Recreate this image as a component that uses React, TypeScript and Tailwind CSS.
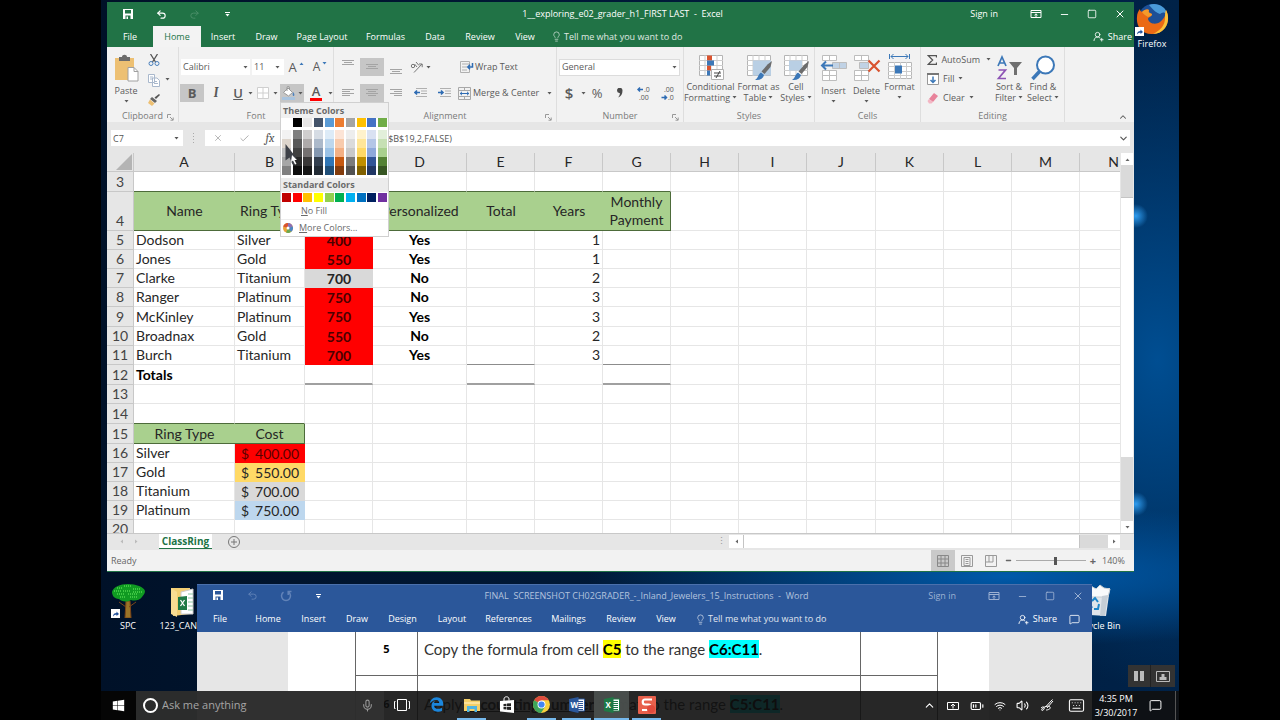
import type { ReactNode } from "react";
import clsx from "clsx";
import {
  BatteryMedium,
  Check,
  ChevronDown,
  ChevronUp,
  Keyboard,
  Lightbulb,
  MessageSquare,
  Mic,
  Minus,
  Square,
  Undo2,
  UserRoundPlus,
  Volume2,
  Wifi,
  X,
} from "lucide-react";
import { FaEdgeLegacy, FaWindows } from "react-icons/fa";

/* ---------- data ---------- */

const excelTabs = [
  { name: "File", width: "w-[46px]" },
  { name: "Home", width: "w-12" },
  { name: "Insert", width: "w-11" },
  { name: "Draw", width: "w-[43px]" },
  { name: "Page Layout", width: "w-[68px]" },
  { name: "Formulas", width: "w-[59px]" },
  { name: "Data", width: "w-10" },
  { name: "Review", width: "w-[50px]" },
  { name: "View", width: "w-10" },
];

const wordTabs = [
  { name: "File", width: "w-[46px]" },
  { name: "Home", width: "w-[50px]" },
  { name: "Insert", width: "w-[41px]" },
  { name: "Draw", width: "w-[46px]" },
  { name: "Design", width: "w-[45px]" },
  { name: "Layout", width: "w-[54px]" },
  { name: "References", width: "w-[59px]" },
  { name: "Mailings", width: "w-[61px]" },
  { name: "Review", width: "w-11" },
  { name: "View", width: "w-[46px]" },
];

const columns = [
  { name: "A", width: "w-[101px]" },
  { name: "B", width: "w-[70px]" },
  { name: "C", width: "w-[68px]" },
  { name: "D", width: "w-[94px]" },
  { name: "E", width: "w-[68px]" },
  { name: "F", width: "w-[68px]" },
  { name: "G", width: "w-[68px]" },
  { name: "H", width: "w-[68px]" },
  { name: "I", width: "w-[68px]" },
  { name: "J", width: "w-[69px]" },
  { name: "K", width: "w-[68px]" },
  { name: "L", width: "w-[68px]" },
  { name: "M", width: "w-[68px]" },
  { name: "N", width: "w-[68px]" },
];

type Row = { n: number; tall?: boolean; cells: string[] };

const rows: Row[] = [
  { n: 3, tall: true, cells: [] },
  {
    n: 4,
    cells: ["Name", "Ring Type", "Cost", "Personalized", "Total", "Years", "Monthly Payment"],
  },
  { n: 5, cells: ["Dodson", "Silver", "400", "Yes", "", "1"] },
  { n: 6, cells: ["Jones", "Gold", "550", "Yes", "", "1"] },
  { n: 7, cells: ["Clarke", "Titanium", "700", "No", "", "2"] },
  { n: 8, cells: ["Ranger", "Platinum", "750", "No", "", "3"] },
  { n: 9, tall: true, cells: ["McKinley", "Platinum", "750", "Yes", "", "3"] },
  { n: 10, cells: ["Broadnax", "Gold", "550", "No", "", "2"] },
  { n: 11, cells: ["Burch", "Titanium", "700", "Yes", "", "3"] },
  { n: 12, tall: true, cells: ["Totals"] },
  { n: 13, cells: [] },
  { n: 14, tall: true, cells: [] },
  { n: 15, tall: true, cells: ["Ring Type", "Cost"] },
  { n: 16, cells: ["Silver", "400.00"] },
  { n: 17, cells: ["Gold", "550.00"] },
  { n: 18, cells: ["Titanium", "700.00"] },
  { n: 19, cells: ["Platinum", "750.00"] },
  { n: 20, cells: [] },
];

const costFill: Record<number, string> = {
  16: "bg-[#ff0000]",
  17: "bg-[#ffd966]",
  18: "bg-[#d9d9d9]",
  19: "bg-[#bdd7ee]",
};

const themeColors = [
  ["#ffffff", "#f2f2f2", "#ddd5cc", "#bfbfbf", "#a6a6a6", "#808080"],
  ["#000000", "#7f7f7f", "#595959", "#404040", "#262626", "#0d0d0d"],
  ["#e7e6e6", "#d0cece", "#aeaaaa", "#757171", "#3a3838", "#161616"],
  ["#44546a", "#d6dce4", "#acb9ca", "#8497b0", "#333f4f", "#222b35"],
  ["#5b9bd5", "#ddebf7", "#bdd7ee", "#9bc2e6", "#2f75b5", "#1f4e78"],
  ["#ed7d31", "#fce4d6", "#f8cbad", "#f4b084", "#c65911", "#833c0c"],
  ["#a5a5a5", "#ededed", "#dbdbdb", "#c9c9c9", "#7b7b7b", "#525252"],
  ["#ffc000", "#fff2cc", "#ffe699", "#ffd966", "#bf8f00", "#806000"],
  ["#4472c4", "#d9e1f2", "#b4c6e7", "#8ea9db", "#305496", "#203764"],
  ["#70ad47", "#e2efda", "#c6e0b4", "#a9d08e", "#548235", "#375623"],
];

const standardColors = [
  "#c00000", "#ff0000", "#ffc000", "#ffff00", "#92d050",
  "#00b050", "#00b0f0", "#0070c0", "#002060", "#7030a0",
];

/* ---------- small shared pieces ---------- */

const Caret = ({ className }: { className?: string }) => (
  <svg viewBox="0 0 5 3" className={clsx("w-[5px] h-[3px] shrink-0", className)} fill="currentColor">
    <path d="M0.5 0h4L2.5 2.5z" />
  </svg>
);

const RibbonOptions = () => (
  <svg viewBox="0 0 12 10" className="w-3 h-2.5" fill="none" stroke="currentColor">
    <path d="M1 1.5h10v7H1zM1 3.5h10M6 8V5M4.5 6.2L6 4.8l1.500 1.400" />
  </svg>
);

const WindowButtons = () => (
  <div className="flex">
    <button aria-label="Ribbon display options" className="w-7 h-[22px] flex items-center justify-center">
      <RibbonOptions />
    </button>
    <button aria-label="Minimize" className="w-7 h-[22px] flex items-center justify-center">
      <Minus size={11} strokeWidth={2} />
    </button>
    <button aria-label="Maximize" className="w-7 h-[22px] flex items-center justify-center">
      <Square size={10} strokeWidth={2} />
    </button>
    <button aria-label="Close" className="w-7 h-[22px] flex items-center justify-center">
      <X size={12} strokeWidth={2} />
    </button>
  </div>
);

const SaveIcon = () => (
  <svg viewBox="0 0 10 10" className="w-2.5 h-2.5">
    <path d="M0 0h10v10H0z" fill="#fff" />
    <path d="M2 1h6v3.500H2zM2.500 6.500h5V10h-5z" fill="currentColor" />
    <path d="M3.500 7.500h1.500V10H3.500z" fill="#fff" />
  </svg>
);

const RepeatIcon = () => (
  <svg viewBox="0 0 12 12" className="w-3 h-3" fill="none" stroke="currentColor" strokeWidth="1.500">
    <path d="M8.500 2.200A4.500 4.500 0 1 1 3.500 2.200M8.200 5V1.500h3.300" />
  </svg>
);

const QuickCaret = () => (
  <svg viewBox="0 0 5 5" className="w-[5px] h-[5px]" fill="#fff">
    <path d="M0 0h5v1H0zM0.500 2h4L2.500 4.500z" />
  </svg>
);

const Launcher = () => (
  <svg viewBox="0 0 7 7" className="w-[7px] h-[7px] text-[#999]" fill="none" stroke="currentColor">
    <path d="M0.500 4V0.500H4M3 3l3 3M6.200 3.500v2.700H3.500" />
  </svg>
);

const Group = ({
  label,
  width,
  launcher,
  children,
}: {
  label: string;
  width: string;
  launcher?: boolean;
  children: ReactNode;
}) => (
  <section className={clsx("shrink-0 flex flex-col border-r border-[#dedede]", width)}>
    <div className="h-[63px] pt-[7px]">{children}</div>
    <div className="h-3 flex items-center justify-center relative text-[#7a7a7a]">
      {label}
      {launcher && (
        <button aria-label={`${label} settings`} className="absolute right-1 top-1">
          <Launcher />
        </button>
      )}
    </div>
  </section>
);

const Tool = ({
  label,
  active,
  width = "w-6",
  children,
}: {
  label: string;
  active?: boolean;
  width?: string;
  children: ReactNode;
}) => (
  <button
    aria-label={label}
    className={clsx("h-[18px] shrink-0 flex items-center justify-center gap-0.5", width, active && "bg-[#c6c6c6]")}
  >
    {children}
  </button>
);

const BigTool = ({
  lines,
  width,
  icon,
  caretBelow,
}: {
  lines: string[];
  width: string;
  icon: ReactNode;
  caretBelow?: boolean;
}) => (
  <button className={clsx("shrink-0 flex flex-col items-center leading-[11px] whitespace-nowrap", width)}>
    <span className="h-[27px] flex items-center justify-center">{icon}</span>
    <span className={clsx(caretBelow && "pt-1")}>{lines[0]}</span>
    {lines[1] ? (
      <span className="flex items-center gap-0.5">
        {lines[1]}
        <Caret />
      </span>
    ) : (
      <Caret className="mt-1" />
    )}
  </button>
);

/* ---------- ribbon drawings ---------- */

const AlignLines = ({ widths, align }: { widths: number[]; align: "left" | "mid" | "right" }) => (
  <svg viewBox="0 0 12 10" className="w-3 h-2.5" stroke="#a4a4a4">
    {widths.map((w, i) => {
      const x = align === "left" ? 0 : align === "right" ? 12 - w : (12 - w) / 2;
      return <path key={i} d={`M${x} ${i * 2 + 1.5}h${w}`} />;
    })}
  </svg>
);

const VerticalAlign = ({ top }: { top: number }) => (
  <svg viewBox="0 0 12 16" className="w-3 h-4" stroke="#a4a4a4">
    <path d={`M0 ${top + 0.5}h12M2 ${top + 2.5}h8M0 ${top + 4.5}h12`} />
  </svg>
);

const IndentIcon = ({ out }: { out?: boolean }) => (
  <svg viewBox="0 0 13 10" className="w-[13px] h-2.5" fill="none">
    <path d="M2 0.500h11M7 3h6M7 5.500h6M2 8.500h11" stroke="#b0b0b0" />
    <path
      d={out ? "M6 4.500H1M3 2.500l-2 2 2 2" : "M0 4.500h5M3 2.500l2 2-2 2"}
      stroke="#2f6cb3"
      strokeWidth="1.600"
    />
  </svg>
);

const Grid = ({ children }: { children?: ReactNode }) => (
  <svg viewBox="0 0 26 26" className="w-[26px] h-[26px]" fill="none">
    <path d="M1.500 0.500h23v20h-23z" fill="#fff" stroke="#b5b5b5" />
    <path d="M1 5.500h24M1 10.500h24M1 15.500h24M7 0v21M13 0v21M19 0v21" stroke="#cdcdcd" />
    {children}
  </svg>
);

const Brush = () => (
  <>
    <path d="M26 6l-1.500 6-6 7-3-2.500 6-7z" fill="#6c6c6c" />
    <path d="M15 17.500l3 2.500c-1 4-4 5.500-9 5 3-1.500 3-5.500 6-7.500z" fill="#3c78b8" />
  </>
);

const PasteIcon = () => (
  <svg viewBox="0 0 26 28" className="w-[26px] h-7">
    <path d="M2 4h19v22H2z" fill="#edc073" />
    <path d="M6 3h3c0-3 5-3 5 0h3v4H6z" fill="#6b6b6b" />
    <path d="M15 13.500h6l4 4V27H15z" fill="#fff" stroke="#a0a0a0" />
    <path d="M21 13.500v4h4" fill="none" stroke="#a0a0a0" />
  </svg>
);

const ScissorsIcon = () => (
  <svg viewBox="0 0 12 12" className="w-3 h-3" fill="none">
    <path d="M2.500 0l5 8M9.500 0l-5 8" stroke="#555" strokeWidth="1.300" />
    <circle cx="3" cy="9.500" r="2" stroke="#4a80bd" />
    <circle cx="9" cy="9.500" r="2" stroke="#4a80bd" />
  </svg>
);

const CopyIcon = () => (
  <svg viewBox="0 0 12 13" className="w-3 h-[13px]" fill="#fff" stroke="#a9b8cc">
    <path d="M0.500 0.500h6v8h-6zM4.500 4h4.500l2.500 2.500v6h-7z" />
    <path d="M6 7.500h3M6 9.500h4M2 3h3M2 5h2" />
  </svg>
);

const PainterIcon = () => (
  <svg viewBox="0 0 12 12" className="w-3 h-3">
    <path d="M11 0l1 1-4 4-1.500-1.500z" fill="#555" />
    <path d="M4 3l5 4-2 2-5-4z" fill="#666" />
    <path d="M2 5.500l4.500 4L4 12 0 9z" fill="#edc073" />
  </svg>
);

const OrientationIcon = () => (
  <svg viewBox="0 0 14 12" className="w-3.5 h-3" fill="none" stroke="#777">
    <path d="M4 11.500L12 3M9 3h3.200v3.200" />
    <circle cx="3" cy="5" r="1.700" />
    <path d="M4.500 3l2.500 3M6 1l3 3.500" />
  </svg>
);

const WrapIcon = () => (
  <svg viewBox="0 0 14 12" className="w-3.5 h-3" fill="none">
    <path d="M0.500 0.500h9v11h-9zM2 3h8M2 6h5M2 9h5" stroke="#b0b0b0" />
    <path d="M12.500 2v4H8M10 3.800L7.800 6 10 8.200" stroke="#2f6cb3" strokeWidth="1.500" />
  </svg>
);

const MergeIcon = () => (
  <svg viewBox="0 0 13 13" className="w-[13px] h-[13px]" fill="none">
    <path d="M0.500 0.500h12v12h-12zM0.500 3.500h12M0.500 9.500h12M6.500 0.500v3M6.500 9.500v3" stroke="#a8a8a8" />
    <path d="M2 6.500h9M4 4.800L2.200 6.500 4 8.200M9 4.800l1.800 1.700L9 8.200" stroke="#2f6cb3" />
  </svg>
);

const BucketIcon = () => (
  <svg viewBox="0 0 14 14" className="w-3.5 h-3.5">
    <path d="M0 11h13v3H0z" fill="#a9c4df" />
    <path d="M1.500 6.500L6 2l4.500 4.500L6.500 10z" fill="#fff" stroke="#999" />
    <path d="M5 5V1.500C5 0 7.500 0 7.500 1.500V4" fill="none" stroke="#999" />
    <path d="M11 6c2 2 1.500 4 0.500 4s-1-2-0.500-4z" fill="#4a80bd" />
  </svg>
);

const DecimalIcon = ({ more }: { more?: boolean }) => (
  <svg viewBox="0 0 14 16" className="w-3.5 h-4">
    <text x={more ? 7 : 3} y="7" fontSize="7" fill="#555">{more ? ".0" : ".00"}</text>
    <text x={more ? 2 : 7} y="15" fontSize="7" fill="#555">{more ? ".00" : ".0"}</text>
    <path
      d={more ? "M6 4.500H1M3 2.500l-2 2 2 2" : "M0.500 12.500h5M3.500 10.500l2 2-2 2"}
      fill="none"
      stroke="#2f6cb3"
      strokeWidth="1.500"
    />
  </svg>
);

const InsertCells = () => (
  <svg viewBox="0 0 28 26" className="w-7 h-[26px]" fill="#fff" stroke="#bdbdbd">
    <path d="M2.500 0.500h14v5h-14zM9.500 0.500v5M2.500 20.500h14v5h-14zM9.500 20.500v5M2.500 15.500h14v5h-14zM9.500 15.500v5" />
    <path d="M12.500 7.500h14v6h-14zM19.500 7.500v6" fill="#c0d2e5" />
    <path d="M13 10.500H2M6 6.500l-4 4 4 4" fill="none" stroke="#3c78b8" strokeWidth="2" />
  </svg>
);

const DeleteCells = () => (
  <svg viewBox="0 0 28 26" className="w-7 h-[26px]" fill="#fff" stroke="#bdbdbd">
    <path d="M1.500 0.500h14v5h-14zM8.500 0.500v5M1.500 20.500h14v5h-14zM8.500 20.500v5M1.500 15.500h14v5h-14zM8.500 15.500v5" />
    <path d="M6.500 7.500h9v6h-9z" fill="#c0d2e5" />
    <path d="M15.500 5.500l11 11M26.500 5.500l-11 11" stroke="#d9532f" strokeWidth="2.200" />
  </svg>
);

const FormatCells = () => (
  <svg viewBox="0 0 26 28" className="w-[26px] h-7" fill="none">
    <path d="M4 2.500h17M6.500 0L4 2.500 6.500 5M18.500 0L21 2.500 18.500 5M2.500 0v5M22.500 0v5" stroke="#3c78b8" />
    <path d="M1.500 8.500h23v16h-23z" fill="#fff" stroke="#b8b8b8" />
    <path d="M7.500 8v17M13.500 8v17M19.500 8v17M1 12.500h24M1 17.500h24M1 21.500h24" stroke="#cdcdcd" />
    <path d="M8 11.500h7v8H8z" fill="#3c78b8" />
  </svg>
);

const SortIcon = () => (
  <svg viewBox="0 0 26 26" className="w-[26px] h-[26px]" fill="none">
    <path d="M2 11L6 2l4 9M3.500 8h5" stroke="#3c78b8" strokeWidth="1.700" />
    <path d="M2.500 15h7l-7 8.500h7.500" stroke="#8d54b5" strokeWidth="1.700" />
    <path d="M13 7h13l-5 6v7h-3v-7z" fill="#707070" />
  </svg>
);

const FindIcon = () => (
  <svg viewBox="0 0 26 26" className="w-[26px] h-[26px]" fill="none" stroke="#3c78b8">
    <circle cx="15.500" cy="10" r="8.500" fill="#fff" strokeWidth="2" />
    <path d="M9.500 16.500L2.500 24" strokeWidth="3.500" />
  </svg>
);

const PersonIcon = () => <UserRoundPlus size={11} strokeWidth={1.8} />;

/* ---------- fill colour menu ---------- */

const ColorMenu = () => (
  <div className="absolute left-0 top-[18px] z-20 w-[109px] bg-white border border-[#d0d0d0] text-[#6a6a6a] text-[9px]">
    <h3 className="h-[15px] bg-[#f0f0f0] pl-0.5 leading-4 font-bold">Theme Colors</h3>
    <div className="flex justify-between px-px pb-[3px]">
      {themeColors.map((shades, i) => (
        <div key={i} className="flex flex-col">
          {shades.map((color, j) => (
            <button
              key={j}
              aria-label={`Theme color ${color}`}
              className={clsx("block w-[9px] h-[9px]", j === 0 && "mb-[3px]")}
              style={{ backgroundColor: color }}
            />
          ))}
        </div>
      ))}
    </div>
    <h3 className="h-[14px] bg-[#ececec] pl-0.5 leading-[14px] font-bold">Standard Colors</h3>
    <div className="flex justify-between px-px pt-px pb-px">
      {standardColors.map((color) => (
        <button
          key={color}
          aria-label={`Standard color ${color}`}
          className="block w-[9px] h-[9px]"
          style={{ backgroundColor: color }}
        />
      ))}
    </div>
    <button className="h-[17px] w-full flex items-center pl-5 border-b border-[#eee]">
      <span>
        <u>N</u>o Fill
      </span>
    </button>
    <button className="h-4 w-full flex items-center pl-0.5 gap-1.5 whitespace-nowrap">
      <svg viewBox="0 0 10 10" className="w-2.5 h-2.5 shrink-0">
        <circle cx="5" cy="5" r="5" fill="#e9a23b" />
        <path d="M5 5V0a5 5 0 0 1 4.700 3.500z" fill="#8a6fb8" />
        <path d="M5 5l4.700-1.500A5 5 0 0 1 8 9z" fill="#4a86c5" />
        <path d="M5 5l3 4a5 5 0 0 1-5 0.500z" fill="#6aa84f" />
        <path d="M5 5L0.200 3.500A5 5 0 0 1 5 0z" fill="#d9532f" />
        <circle cx="5" cy="5" r="1.500" fill="#fff" />
      </svg>
      <span>
        <u>M</u>ore Colors...
      </span>
    </button>
    {/* mouse pointer */}
    <svg viewBox="0 0 13 24" className="absolute left-1 top-10 w-[13px] h-6">
      <path d="M0.500 1v16.500l4-3 3 7h2.500l-2.500-7 4.500 1z" fill="#3d4047" />
      <path d="M7 12l5 5H9.500l2 4-1.500 0.500-2-4L6 19z" fill="#fff" />
    </svg>
  </div>
);

/* ---------- Excel ---------- */

const TabStrip = ({
  tabs,
  active,
  children,
}: {
  tabs: { name: string; width: string }[];
  active?: string;
  children?: ReactNode;
}) => (
  <nav className="flex-1 flex items-stretch text-white whitespace-nowrap">
    {tabs.map(({ name, width }) => (
      <button
        key={name}
        className={clsx(
          "shrink-0 flex items-center justify-center",
          width,
          name === active && "bg-[#f3f3f3] text-[#217346]"
        )}
      >
        {name}
      </button>
    ))}
    <button className="flex items-center gap-0.5 pl-1.5 opacity-85">
      <Lightbulb size={11} strokeWidth={1.5} />
      Tell me what you want to do
    </button>
    <div className="ml-auto flex items-center">{children}</div>
  </nav>
);

const Ribbon = () => (
  <div className="h-[75px] flex bg-[#f2f2f2] text-[#5a5a5a] relative">
    <Group label="Clipboard" width="w-[72px]" launcher>
      <div className="flex">
        <BigTool width="w-[38px]" lines={["Paste"]} icon={<PasteIcon />} caretBelow />
        <div className="flex flex-col justify-between w-[18px] items-center h-[52px]">
          <button aria-label="Cut"><ScissorsIcon /></button>
          <button aria-label="Copy"><CopyIcon /></button>
          <button aria-label="Format Painter"><PainterIcon /></button>
        </div>
        <Caret className="mt-6 ml-0.5" />
      </div>
    </Group>

    <Group label="Font" width="w-[155px]">
      <div className="h-[26px] flex items-center pl-0.5">
        <div className="relative flex items-center">
          <select aria-label="Font" className="appearance-none w-[69px] h-4 bg-white pl-0.5 mr-0.5">
            <option>Calibri</option>
          </select>
          <Caret className="absolute right-1" />
        </div>
        <div className="relative flex items-center">
          <select aria-label="Font size" className="appearance-none w-8 h-4 bg-white pl-0.5">
            <option>11</option>
          </select>
          <Caret className="absolute right-1" />
        </div>
        <Tool label="Increase font size">
          <span className="text-[13px]">A</span>
          <Caret className="rotate-180 text-[#3c78b8] mb-2" />
        </Tool>
        <Tool label="Decrease font size">
          <span className="text-xs">A</span>
          <Caret className="text-[#3c78b8] mb-2" />
        </Tool>
      </div>
      <div className="h-[26px] flex items-center pl-px">
        <Tool label="Bold" active><b className="text-[13px]">B</b></Tool>
        <Tool label="Italic"><i className="text-[13px] font-serif font-bold">I</i></Tool>
        <Tool label="Underline" width="w-5"><u className="text-[13px] font-semibold">U</u></Tool>
        <Caret />
        <Tool label="Borders" width="w-5">
          <svg viewBox="0 0 12 12" className="w-3 h-3" fill="#fff" stroke="#cfcfcf">
            <path d="M0.500 0.500h11v11h-11zM6 0.500v11M0.500 6h11" />
          </svg>
        </Tool>
        <Caret className="mr-0.5" />
        <div className="relative">
          <Tool label="Fill color" active>
            <BucketIcon />
            <Caret />
          </Tool>
          <ColorMenu />
        </div>
        <Tool label="Font color">
          <span className="border-b-[3px] border-[#ff0000] px-0.5 text-[13px] leading-[13px] font-semibold">A</span>
        </Tool>
        <Caret />
      </div>
    </Group>

    <Group label="Alignment" width="w-[223px]" launcher>
      <div className="h-[26px] flex items-center pl-0.5">
        <Tool label="Top align"><VerticalAlign top={1} /></Tool>
        <Tool label="Middle align" active><VerticalAlign top={5} /></Tool>
        <Tool label="Bottom align"><VerticalAlign top={10} /></Tool>
        <Tool label="Orientation"><OrientationIcon /><Caret /></Tool>
        <button className="ml-7 flex items-center gap-px">
          <WrapIcon />
          Wrap Text
        </button>
      </div>
      <div className="h-[26px] flex items-center pl-0.5">
        <Tool label="Align left"><AlignLines widths={[12, 8, 12, 8]} align="left" /></Tool>
        <Tool label="Center" active><AlignLines widths={[12, 8, 12, 8]} align="mid" /></Tool>
        <Tool label="Align right"><AlignLines widths={[12, 8, 12, 8]} align="right" /></Tool>
        <Tool label="Decrease indent"><IndentIcon out /></Tool>
        <Tool label="Increase indent"><IndentIcon /></Tool>
        <button className="ml-0.5 flex items-center gap-0.5 whitespace-nowrap">
          <MergeIcon />
          Merge &amp; Center
          <Caret className="ml-1.5" />
        </button>
      </div>
    </Group>

    <Group label="Number" width="w-[127px]" launcher>
      <div className="h-[26px] flex items-center relative">
        <select aria-label="Number format" className="appearance-none w-[121px] h-[17px] ml-0.5 pl-0.5 bg-white border border-[#dcdcdc]">
          <option>General</option>
        </select>
        <Caret className="absolute right-1.5" />
      </div>
      <div className="h-[26px] flex items-center">
        <Tool label="Accounting format"><span className="text-[15px] font-semibold">$</span></Tool>
        <Caret />
        <Tool label="Percent style" width="w-[22px]"><span className="text-[13px]">%</span></Tool>
        <Tool label="Comma style">
          <svg viewBox="0 0 6 10" className="w-1.5 h-2.5" fill="#4a4a4a">
            <path d="M0 2.500a2.500 2.500 0 0 1 5.500 0C5.500 6 4 8.500 1 9.500 2.500 8 3 6.500 2.800 5A2.500 2.500 0 0 1 0 2.500z" />
          </svg>
        </Tool>
        <Tool label="Increase decimal"><DecimalIcon more /></Tool>
        <Tool label="Decrease decimal"><DecimalIcon /></Tool>
      </div>
    </Group>

    <Group label="Styles" width="w-[131px]">
      <div className="flex">
        <BigTool
          width="w-[53px]"
          lines={["Conditional", "Formatting"]}
          icon={
            <Grid>
              <path d="M9 0.500h5v5H9zM9 10.500h4v5H9z" fill="#d9532f" />
              <path d="M9 5.500h7v5H9zM9 15.500h3v5H9z" fill="#3c78b8" />
              <path d="M13.500 14.500h12v10h-12z" fill="#fff" stroke="#b0b0b0" />
              <path d="M16 18h7M16 21h7M22 16l-4 7" stroke="#444" />
            </Grid>
          }
        />
        <BigTool
          width="w-[43px]"
          lines={["Format as", "Table"]}
          icon={
            <Grid>
              <path d="M7 5.500h18v15H7z" fill="#b9cfe4" />
              <Brush />
            </Grid>
          }
        />
        <BigTool
          width="w-8"
          lines={["Cell", "Styles"]}
          icon={
            <Grid>
              <path d="M6 5.500h13v10H6z" fill="#b9cfe4" />
              <Brush />
            </Grid>
          }
        />
      </div>
    </Group>

    <Group label="Cells" width="w-[106px]">
      <div className="flex pl-0.5">
        <BigTool width="w-[33px]" lines={["Insert"]} icon={<InsertCells />} caretBelow />
        <BigTool width="w-[33px]" lines={["Delete"]} icon={<DeleteCells />} caretBelow />
        <BigTool width="w-[33px]" lines={["Format"]} icon={<FormatCells />} />
      </div>
    </Group>

    <Group label="Editing" width="w-[144px]">
      <div className="flex">
        <div className="w-[70px] pl-1.5 flex flex-col -mt-1 whitespace-nowrap">
          <button className="h-[19px] flex items-center gap-1">
            <svg viewBox="0 0 12 12" className="w-3 h-3" fill="none" stroke="#555" strokeWidth="1.500">
              <path d="M11 3V1H1.500L6.500 6l-5 5H11V9" />
            </svg>
            AutoSum
            <Caret className="ml-0.5" />
          </button>
          <button className="h-[19px] flex items-center gap-1">
            <svg viewBox="0 0 12 12" className="w-3 h-3" fill="none">
              <path d="M0.500 0.500h11v11h-11z" fill="#fff" stroke="#999" />
              <path d="M0 1h12" stroke="#777" strokeWidth="2" />
              <path d="M6 3.500v6M3.500 7L6 9.500 8.500 7" stroke="#3c78b8" strokeWidth="1.500" />
            </svg>
            Fill
            <Caret />
          </button>
          <button className="h-[19px] flex items-center gap-1">
            <svg viewBox="0 0 12 12" className="w-3 h-3">
              <path d="M7 1l4 3-5 6-4-3z" fill="#e8839b" />
              <path d="M2 7l4 3-1.500 1.500H2L0.500 9z" fill="#f3b6c3" />
            </svg>
            Clear
            <Caret />
          </button>
        </div>
        <BigTool width="w-9" lines={["Sort &", "Filter"]} icon={<SortIcon />} />
        <BigTool width="w-8" lines={["Find &", "Select"]} icon={<FindIcon />} />
      </div>
    </Group>

    <button aria-label="Collapse the ribbon" className="ml-auto self-end pr-1.5">
      <ChevronUp size={10} strokeWidth={2.5} />
    </button>
  </div>
);

const FormulaBar = () => (
  <div className="h-[31px] flex items-start pt-2 px-1 bg-[#e6e6e6] text-[#555]">
    <div className="relative flex items-center">
      <input aria-label="Name box" defaultValue="C7" className="w-[72px] h-4 bg-white pl-0.5 outline-none" />
      <Caret className="absolute right-1" />
    </div>
    <svg viewBox="0 0 2 10" className="w-0.5 h-2.5 mx-2.5 mt-[3px]" fill="#aaa">
      <path d="M0 0h1v1H0zM0 3h1v1H0zM0 6h1v1H0zM0 9h1v1H0z" />
    </svg>
    <div className="flex items-center h-4 bg-white text-[#aaa]">
      <button aria-label="Cancel" className="w-[26px] flex justify-center"><X size={10} /></button>
      <button aria-label="Enter" className="w-[26px] flex justify-center"><Check size={11} /></button>
      <button aria-label="Insert function" className="w-[26px] font-serif italic text-xs text-[#555]">fx</button>
    </div>
    <div className="flex-1 flex items-center h-4 bg-white ml-0.5">
      <input
        aria-label="Formula"
        defaultValue="=VLOOKUP(C7,$A$16:$B$19,2,FALSE)"
        className="flex-1 h-4 pl-3 bg-transparent outline-none"
      />
      <ChevronDown size={11} strokeWidth={2.5} className="mr-px" />
    </div>
  </div>
);

const cellClass = (n: number, c: number) => {
  const grid = "border-r border-b border-[#e6e6e6]";
  if (n === 4 && c < 7)
    return clsx("bg-[#a9d08e] text-center border-b border-b-[#4d6b3a]", c === 6 && "border-r border-r-[#4d6b3a]");
  if (n === 3 && c < 7) return "border-r border-r-[#e6e6e6] border-b border-b-[#4d6b3a]";
  if (n >= 5 && n <= 11) {
    if (c === 2) return clsx("text-center font-bold", n === 7 ? "bg-[#d9d9d9]" : "bg-[#ff0000] text-[#4a0000]");
    if (c === 3) return clsx(grid, "text-center font-bold text-black");
    if (c === 5) return clsx(grid, "text-right");
    if (n === 11 && (c === 4 || c === 6)) return "border-r border-r-[#e6e6e6] border-b border-b-[#8c8c8c]";
  }
  if (n === 12 && c === 0) return clsx(grid, "font-bold text-black");
  if (n === 12 && (c === 2 || c === 4 || c === 6))
    return "border-r border-r-[#e6e6e6] border-b-2 border-b-[#a0a0a0]";
  if (n === 14 && c < 2) return "border-r border-r-[#e6e6e6] border-b border-b-[#4d6b3a]";
  if (n === 15 && c < 2)
    return clsx("bg-[#a9d08e] text-center border-b border-b-[#4d6b3a]", c === 1 && "border-r border-r-[#4d6b3a]");
  if (n >= 16 && n <= 19 && c === 1) return clsx(costFill[n], n === 16 && "text-[#5a0000]");
  return grid;
};

const Sheet = () => (
  <div className="flex-1 min-h-0 flex bg-[#e6e6e6]">
    <div className="flex-1 min-w-0 overflow-hidden">
      <table className="table-fixed w-[1041px] border-separate border-spacing-0 bg-white font-['Lato',sans-serif] text-sm leading-[18px] text-[#262626]">
        <thead>
          <tr className="h-[18px] bg-[#e6e6e6]">
            <th className="w-[27px] p-0 border-r border-b border-[#c8c8c8]">
              <svg viewBox="0 0 16 16" className="ml-auto mr-px w-4 h-4" fill="#b4b4b4">
                <path d="M16 0v16H0z" />
              </svg>
            </th>
            {columns.map(({ name, width }) => (
              <th key={name} className={clsx("p-0 font-normal border-r border-b border-[#c8c8c8]", width)}>
                {name}
              </th>
            ))}
          </tr>
        </thead>
        <tbody>
          {rows.map(({ n, tall, cells }) => (
            <tr key={n} className={n === 4 ? "h-[39px]" : tall ? "h-5" : "h-[19px]"}>
              <th className="p-0 bg-[#e6e6e6] font-normal text-center align-bottom border-r border-b border-[#c8c8c8] text-[#444]">
                {n}
              </th>
              {columns.map(({ name }, c) => (
                <td key={name} className={clsx("p-0 px-0.5", cellClass(n, c))}>
                  {n >= 16 && c === 1 && cells[c] ? (
                    <span className="flex justify-between pl-1 pr-1">
                      <span>$</span>
                      <span>{cells[c]}</span>
                    </span>
                  ) : (
                    cells[c]
                  )}
                </td>
              ))}
            </tr>
          ))}
        </tbody>
      </table>
    </div>
    <div className="w-3.5 shrink-0 flex flex-col bg-[#e6e6e6] pl-px pr-px">
      <button aria-label="Scroll up" className="h-3 bg-white flex items-center justify-center">
        <Caret className="rotate-180 text-[#666]" />
      </button>
      <div className="flex-1 bg-[#dadada] pt-8 pb-16 flex">
        <div className="flex-1 bg-white border-t border-[#c4c4c4]" />
      </div>
      <button aria-label="Scroll down" className="h-3 bg-white flex items-center justify-center">
        <Caret className="text-[#666]" />
      </button>
    </div>
  </div>
);

const SheetBar = () => (
  <div className="h-[17px] flex bg-[#e6e6e6] border-t border-[#c8c8c8] pb-px">
    <div className="w-[52px] flex items-center gap-2.5 pl-3 text-[#bbb]">
      <Caret className="rotate-90" />
      <Caret className="-rotate-90" />
    </div>
    <button className="w-[53px] bg-white border-b border-[#217346] text-[#217346] font-bold text-[10px] leading-3">
      ClassRing
    </button>
    <button aria-label="New sheet" className="ml-4 w-3 flex items-center">
      <svg viewBox="0 0 12 12" className="w-3 h-3" fill="none" stroke="#777">
        <circle cx="6" cy="6" r="5.500" />
        <path d="M6 3v6M3 6h6" />
      </svg>
    </button>
    <div className="ml-auto w-[417px] flex pr-3.5 py-px">
      <span className="w-3 text-[#999] leading-[11px]">⋮</span>
      <button aria-label="Scroll left" className="w-3.5 bg-white flex items-center justify-center text-[#666]">
        <Caret className="rotate-90" />
      </button>
      <div className="flex-1 bg-[#dadada] pr-7">
        <div className="h-full bg-white border-x border-[#c4c4c4]" />
      </div>
      <button aria-label="Scroll right" className="w-3 bg-white flex items-center justify-center text-[#666]">
        <Caret className="-rotate-90" />
      </button>
    </div>
  </div>
);

const StatusBar = () => (
  <div className="h-[22px] flex items-center bg-[#f2f2f2] border-b border-[#217346] text-[#666] pl-1">
    Ready
    <div className="ml-auto flex items-center">
      <button aria-label="Normal view" className="w-6 h-[21px] bg-[#c9c9c9] flex items-center justify-center">
        <svg viewBox="0 0 12 12" className="w-3 h-3" fill="none" stroke="#888">
          <path d="M0.500 0.500h11v11h-11zM4 0v12M8 0v12M0 4h12M0 8h12" />
        </svg>
      </button>
      <button aria-label="Page layout view" className="w-6 flex justify-center">
        <svg viewBox="0 0 12 12" className="w-3 h-3" fill="none" stroke="#999">
          <path d="M0.500 0.500h11v11h-11zM3 2.500h6v8H3zM4.500 4.500h3M4.500 6.500h3M4.500 8.500h3" />
        </svg>
      </button>
      <button aria-label="Page break preview" className="w-6 flex justify-center">
        <svg viewBox="0 0 12 12" className="w-3 h-3" fill="none" stroke="#999">
          <path d="M0.500 0.500h11v11h-11zM4 0v7M8 0v7M0 7h8" />
        </svg>
      </button>
      <button aria-label="Zoom out" className="mx-0.5"><Minus size={7} strokeWidth={5} /></button>
      <div className="relative w-[70px] h-3 mx-0.5 flex items-center">
        <div className="w-full h-px bg-[#aaa]" />
        <input type="range" aria-label="Zoom" min={10} max={400} defaultValue={140} className="absolute inset-0 w-full opacity-0" />
        <span className="absolute left-[38px] w-[3px] h-2 bg-[#555]" />
      </div>
      <button aria-label="Zoom in" className="mx-0.5 font-bold text-[11px] leading-3">+</button>
      <span className="w-9 pl-1">140%</span>
    </div>
  </div>
);

const ExcelWindow = () => (
  <main className="absolute left-1.5 right-[45px] top-0.5 bottom-[148px] flex flex-col overflow-hidden text-[9px] leading-3">
    <header className="bg-[#217346] h-[45px] flex flex-col">
      <div className="h-6 flex items-center text-white">
        <div className="flex-1 flex pl-1 text-[#217346]">
          <button aria-label="Save" className="w-[34px] flex justify-center"><SaveIcon /></button>
          <button aria-label="Undo" className="w-[33px] flex justify-center text-white"><Undo2 size={11} strokeWidth={2.5} /></button>
          <button aria-label="Redo" className="w-[33px] flex justify-center text-[#4b8f69]"><Undo2 size={11} className="-scale-x-100" /></button>
          <button aria-label="Customize" className="w-8 flex justify-center items-center"><QuickCaret /></button>
        </div>
        <h1 className="whitespace-pre">1__exploring_e02_grader_h1_FIRST LAST  -  Excel</h1>
        <div className="flex-1 flex items-center justify-end">
          <button className="mr-6">Sign in</button>
          <WindowButtons />
        </div>
      </div>
      <TabStrip tabs={excelTabs} active="Home">
        <button className="flex items-center gap-1 pr-0.5">
          <PersonIcon />
          Share
        </button>
      </TabStrip>
    </header>
    <Ribbon />
    <FormulaBar />
    <Sheet />
    <SheetBar />
    <StatusBar />
  </main>
);

/* ---------- Word ---------- */

const WordWindow = () => (
  <section className="absolute left-24 right-[87px] top-[584px] bottom-0 flex flex-col overflow-hidden text-[9px] leading-3">
    <header className="bg-[#2b579a] h-12 shrink-0 pb-px flex flex-col border-t border-[#4a70ac]">
      <div className="h-[22px] flex items-center text-[#b4c4de]">
        <div className="flex-1 flex pl-1 text-[#2b579a]">
          <button aria-label="Save" className="w-[34px] flex justify-center"><SaveIcon /></button>
          <button aria-label="Undo" className="w-[34px] flex justify-center text-[#6283b8]"><Undo2 size={11} /></button>
          <button aria-label="Repeat" className="w-[34px] flex justify-center text-[#6283b8]"><RepeatIcon /></button>
          <button aria-label="Customize" className="w-[30px] flex justify-center items-center"><QuickCaret /></button>
        </div>
        <h2 className="whitespace-pre">FINAL  SCREENSHOT CH02GRADER_-_Inland_Jewelers_15_Instructions  -  Word</h2>
        <div className="flex-1 flex items-center justify-end text-[#9db2d3]">
          <button className="mr-6">Sign in</button>
          <WindowButtons />
        </div>
      </div>
      <TabStrip tabs={wordTabs}>
        <button className="flex items-center gap-1">
          <PersonIcon />
          Share
        </button>
        <button aria-label="Comments" className="ml-3 mr-3">
          <MessageSquare size={11} strokeWidth={1.8} />
        </button>
      </TabStrip>
    </header>
    <div className="flex-1 min-h-0 flex justify-center bg-[#e6e6e6] pl-[91px] pr-[103px]">
      <div className="flex-1 bg-white pl-[67px] pr-[51px] overflow-hidden">
        <table className="w-full table-fixed border-collapse font-['Lato',sans-serif] text-[15px] text-[#333] leading-5">
          <tbody>
            <tr className="h-[43px]">
              <th className="w-[62px] p-0 pt-[7px] align-top border border-t-0 border-[#666] font-['Open_Sans',sans-serif] text-[11px] text-black">5</th>
              <td className="p-0 pt-[7px] pl-1.5 align-top border border-t-0 border-[#666] whitespace-nowrap">
                Copy the formula from cell <b className="bg-[#ffff00] text-black">C5</b> to the range{" "}
                <b className="bg-[#00ffff] text-black">C6:C11</b>.
              </td>
              <td className="w-[77px] border border-t-0 border-[#666]" />
            </tr>
            <tr className="h-12">
              <th className="p-0 pt-[18px] align-top border border-[#666] font-['Open_Sans',sans-serif] text-[11px] text-black">6</th>
              <td className="p-0 pt-[18px] pl-1.5 align-top border border-[#666] whitespace-nowrap">
                Apply <b className="underline">accounting number</b> format to the range{" "}
                <b className="bg-[#00ffff] text-black">C5:C11</b>.
              </td>
              <td className="border border-[#666]" />
            </tr>
          </tbody>
        </table>
      </div>
    </div>
  </section>
);

/* ---------- desktop ---------- */

const Shortcut = () => (
  <svg viewBox="0 0 9 9" className="absolute left-0 bottom-0 w-[9px] h-[9px]">
    <path d="M0 0h9v9H0z" fill="#fff" />
    <path d="M2 7.500C2 5 3.500 4 5.500 4V2.500L8 5 5.500 7V5.700C4 5.700 3 6 2 7.500z" fill="#1e4f9c" />
  </svg>
);

const FirefoxIcon = () => (
  <svg viewBox="0 0 34 34" className="w-[34px] h-[34px]">
    <circle cx="18" cy="17" r="15" fill="#1d4f96" />
    <path d="M14 3c7-3 17 1 18 9-3-2-5-2-7 0-3-1-6-3-11-9z" fill="#4a9ad8" />
    <path d="M31 8c5 9 1 23-13 24C7 33 1 24 2 15c0-3 1-6 3-8 0 2 1 2 2 3 2-2 4-3 7-2-1 2 0 3 3 4 0 3-4 3-4 5 1 5 8 6 12 3 5-4 6-8 6-12z" fill="#ea6a15" />
    <path d="M31 8c5 9 1 23-13 24 8-4 12-9 12-16 0-3 0-6 1-8z" fill="#f9c33a" />
    <path d="M7 10c2-2 4-3 7-2-1 2 0 3 3 4 0 2-2 2-4 3-3-2-5-3-6-5z" fill="#f59b2b" />
  </svg>
);

const TreeIcon = () => (
  <svg viewBox="0 0 34 34" className="w-[34px] h-[34px]">
    <path d="M15 17h4l1 17h-6zM15 23l-7-5M18 23l7-5" fill="#9a7428" stroke="#7a4518" />
    <path d="M1 8c1-5 8-8 16-8s16 3 17 7c0 3-2 4-3 6-3 4-8 4-11 3-5 3-10 1-12-1-5 0-7-4-7-7z" fill="#109a22" />
    <path d="M6 4h5M13 2h7M22 5h7M3 7h7M12 7h8M22 8h9M6 10h8M17 10h10M9 13h6M19 13h7" stroke="#4fd64f" strokeWidth="1.500" strokeDasharray="1 1" />
  </svg>
);

const FolderIcon = () => (
  <svg viewBox="0 0 28 32" className="w-7 h-8">
    <path d="M1 2h19v26L3 30z" fill="#f3cf73" />
    <path d="M11 6l12-3v25H11z" fill="#fff" stroke="#ccc" />
    <path d="M8 11l9-1v14H8z" fill="#1f7a46" />
    <path d="M10.500 14l4 6M14.500 14l-4 6" stroke="#fff" strokeWidth="1.300" />
    <path d="M18 8h5M18 12h5M18 16h5M18 20h5M18 24h5" stroke="#8cc7a3" />
    <path d="M1 2l6 4v25l-6-3z" fill="#f9dc92" />
  </svg>
);

const BinIcon = () => (
  <svg viewBox="0 0 30 34" className="w-[30px] h-[34px]">
    <path d="M2 4l26 0-4 28-16-1z" fill="#dfe5ea" />
    <path d="M4 6l5-4 5 3 4-4 4 3 6 1-2 8H5z" fill="#f8fafb" stroke="#c4ccd2" />
    <path d="M20 12l6-1-3 20-5 1z" fill="#c5ced6" />
    <path d="M10 17l3-3 3 4M17 20l-1 5h-4M10 24l-2-4" fill="none" stroke="#1d86c9" strokeWidth="2" />
  </svg>
);

const DesktopIcon = ({
  label,
  place,
  shortcut,
  children,
}: {
  label: string;
  place: string;
  shortcut?: boolean;
  children: ReactNode;
}) => (
  <button className={clsx("absolute flex flex-col items-center text-white text-[9px] leading-4 whitespace-nowrap", place)}>
    <span className="relative">
      {children}
      {shortcut && <Shortcut />}
    </span>
    {label}
  </button>
);

/* ---------- taskbar ---------- */

const ChromeIcon = () => (
  <svg viewBox="0 0 18 18" className="w-[17px] h-[17px]">
    <circle cx="9" cy="9" r="9" fill="#f8d03e" />
    <path d="M9 9L1.200 4.500A9 9 0 0 1 16.800 4.500H9z" fill="#dd4b3e" />
    <path d="M9 9L1.200 4.500A9 9 0 0 0 8.500 18L13 11z" fill="#3fa45a" />
    <circle cx="9" cy="9" r="4.200" fill="#fff" />
    <circle cx="9" cy="9" r="3.300" fill="#4285f4" />
  </svg>
);

const ExplorerIcon = () => (
  <svg viewBox="0 0 16 14" className="w-4 h-3.5">
    <path d="M0 1h6l1 1.500h9V13H0z" fill="#f4cf68" />
    <path d="M0 4h16v2H0z" fill="#fbe29a" />
    <path d="M3 8h10v6h-2.500v-3h-5v3H3z" fill="#4fb4e0" />
  </svg>
);

const StoreIcon = () => (
  <svg viewBox="0 0 16 18" className="w-4 h-[18px]">
    <path d="M1 5l14-1v13L1 15.500z" fill="#fff" />
    <path d="M5 5V3c0-3 5-3 5 0v1.500" fill="none" stroke="#fff" />
    <path d="M4.500 8l3-0.300v2.600h-3zM8 7.600l4-0.400v3.100H8zM4.500 11h3v2.600l-3-0.300zM8 11h4v3.100l-4-0.400z" fill="#222" />
  </svg>
);

const OfficeIcon = ({ letter, color }: { letter: string; color: string }) => (
  <svg viewBox="0 0 16 16" className="w-4 h-4">
    <path d="M8 2h7.500v12H8z" fill="#fff" stroke={color} />
    <path d="M9 4.500h5M9 6.500h5M9 8.500h5M9 10.500h5M9 12.500h5" stroke={color} />
    <path d="M0 2l9.500-2v16L0 14z" fill={color} />
    <text x="1.500" y="11" fontSize="8" fontWeight="bold" fill="#fff">{letter}</text>
  </svg>
);

const SnagitIcon = () => (
  <svg viewBox="0 0 18 18" className="w-[18px] h-[18px]">
    <rect width="18" height="18" rx="1" fill="#e8604c" />
    <path d="M14 3.500H7c-3 0-3 5 0 5h3.500c3 0 3 5.500 0 5.500H4" fill="none" stroke="#fff" strokeWidth="2.200" />
    <circle cx="13" cy="13" r="4" fill="#e04a3c" />
  </svg>
);

const PenIcon = () => (
  <svg viewBox="0 0 14 13" className="w-3.5 h-[13px]" fill="none" stroke="#fff">
    <path d="M12.500 0.500l-7 7.500M13 2l-6 7M1 9c2-2 4-1 3 1s-3 2-2 0 7-4 8-2-2 3-4 3" />
  </svg>
);

const TaskItem = ({
  label,
  open,
  active,
  children,
}: {
  label: string;
  open?: boolean;
  active?: boolean;
  children: ReactNode;
}) => (
  <button
    aria-label={label}
    className={clsx("w-[35px] h-full flex items-center justify-center", active ? "bg-[#4d5250]/90" : "px-[3px]")}
  >
    <span className={clsx("w-full h-full flex items-center justify-center border-b-2", open ? "border-[#76b9ed]" : "border-transparent")}>
      {children}
    </span>
  </button>
);

const Taskbar = () => (
  <footer className="absolute left-0 right-0 bottom-0 h-[29px] flex items-center bg-[#101010]/90 text-white">
    <button aria-label="Start" className="w-[35px] h-full bg-[#050505] flex items-center justify-center">
      <FaWindows size={13} />
    </button>
    <label className="w-[248px] h-full bg-[#333]/80 flex items-center pl-[7px] pr-2.5">
      <span className="w-[15px] h-[15px] rounded-full border-2 border-white shrink-0" />
      <input
        aria-label="Search"
        placeholder="Ask me anything"
        className="flex-1 min-w-0 pl-1 bg-transparent outline-none text-[11px] placeholder:text-[#a5a5a5]"
      />
      <Mic size={13} className="text-[#999]" />
    </label>
    <TaskItem label="Task view">
      <svg viewBox="0 0 16 12" className="w-4 h-3" fill="none" stroke="#fff">
        <path d="M3.500 0.500h9v11h-9zM1.500 2.500h-1v7h1M14.500 2.500h1v7h-1" />
      </svg>
    </TaskItem>
    <TaskItem label="Edge"><FaEdgeLegacy size={15} className="text-[#1b86dc]" /></TaskItem>
    <TaskItem label="File Explorer" open><ExplorerIcon /></TaskItem>
    <TaskItem label="Store"><StoreIcon /></TaskItem>
    <TaskItem label="Chrome" open><ChromeIcon /></TaskItem>
    <TaskItem label="Word" open><OfficeIcon letter="W" color="#2b579a" /></TaskItem>
    <TaskItem label="Excel" open active><OfficeIcon letter="X" color="#1f7a46" /></TaskItem>
    <TaskItem label="Snagit" open><SnagitIcon /></TaskItem>
    <div className="ml-auto flex items-center">
      <button aria-label="Show hidden icons" className="w-6 flex justify-center"><ChevronUp size={13} /></button>
      <span className="w-6 flex justify-center">
        <svg viewBox="0 0 12 10" className="w-3 h-2.5" fill="none" stroke="#fff">
          <path d="M0.500 1.500h11v7h-11zM6 7.500v-4M4 5l2-2 2 2" />
        </svg>
      </span>
      <span className="w-6 flex justify-center"><BatteryMedium size={14} /></span>
      <span className="w-[22px] flex justify-center"><Wifi size={12} /></span>
      <span className="w-[22px] flex justify-center"><Volume2 size={13} /></span>
      <span className="w-7 flex justify-center"><PenIcon /></span>
      <span className="w-[30px] flex justify-center"><Keyboard size={17} strokeWidth={1.5} /></span>
      <time className="w-[50px] text-center text-[9px] leading-[14px]">
        4:35 PM
        <br />
        3/30/2017
      </time>
      <button aria-label="Notifications" className="w-7 flex justify-center">
        <MessageSquare size={13} strokeWidth={1.8} />
      </button>
      <span className="w-1 ml-1.5 h-[29px] border-l border-[#555]" />
    </div>
  </footer>
);

const App = () => {
  return (
    <div className="min-h-screen flex bg-black px-[101px] font-['Open_Sans','Noto_Sans',sans-serif]">
      <div className="relative flex-1 overflow-hidden bg-[radial-gradient(circle_12px_at_96%_30%,#2f9df0,transparent),radial-gradient(circle_12px_at_96%_70%,#2f9df0,transparent),radial-gradient(ellipse_420px_70px_at_84%_80%,#005aaa,transparent),radial-gradient(ellipse_200px_330px_at_98%_50%,#004e92,transparent),linear-gradient(90deg,#001128,#002248)]">
        <DesktopIcon label="Firefox" place="right-[3px] top-0.5 w-12" shortcut>
          <FirefoxIcon />
        </DesktopIcon>
        <DesktopIcon label="SPC" place="left-[9px] top-[584px] w-9" shortcut>
          <TreeIcon />
        </DesktopIcon>
        <DesktopIcon label="123_CANDY" place="left-[55px] top-[586px] w-14">
          <FolderIcon />
        </DesktopIcon>
        <DesktopIcon label="Recycle Bin" place="right-[50px] top-[584px] w-16">
          <BinIcon />
        </DesktopIcon>
        <ExcelWindow />
        <WordWindow />

        {/* screen recorder controls */}
        <div className="absolute right-1 bottom-[33px] flex bg-[#333] text-[#bbb] divide-x divide-[#222]">
          <button aria-label="Pause" className="w-[23px] h-[22px] flex items-center justify-center gap-0.5">
            <span className="w-1 h-2.5 bg-[#bbb]" />
            <span className="w-1 h-2.5 bg-[#bbb]" />
          </button>
          <button aria-label="Webcam" className="w-6 h-[22px] flex items-center justify-center">
            <svg viewBox="0 0 14 11" className="w-3.5 h-[11px]" fill="none" stroke="currentColor">
              <path d="M0.500 0.500h13v10h-13z" />
              <path d="M5.500 3h3v3h2v3h-7V6h2z" fill="currentColor" stroke="none" />
            </svg>
          </button>
        </div>
        <Taskbar />
      </div>
    </div>
  );
};

export default App;
